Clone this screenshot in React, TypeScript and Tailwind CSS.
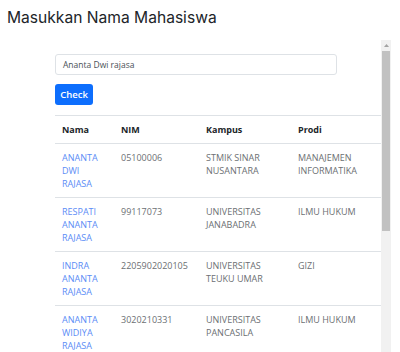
const rows = [
  { nama: ["ANANTA", "DWI", "RAJASA"], nim: "05100006", kampus: ["STMIK SINAR", "NUSANTARA"], prodi: ["MANAJEMEN", "INFORMATIKA"] },
  { nama: ["RESPATI", "ANANTA", "RAJASA"], nim: "99117073", kampus: ["UNIVERSITAS", "JANABADRA"], prodi: ["ILMU HUKUM"] },
  { nama: ["INDRA", "ANANTA", "RAJASA"], nim: "2205902020105", kampus: ["UNIVERSITAS", "TEUKU UMAR"], prodi: ["GIZI"] },
  { nama: ["ANANTA", "WIDIYA", "RAJASA"], nim: "3020210331", kampus: ["UNIVERSITAS", "PANCASILA"], prodi: ["ILMU HUKUM"] },
];

export default function App() {
  return (
    <div className="w-[400px] h-[352px] overflow-hidden bg-white">
      <h1 className="pl-[7px] pt-[8px] text-[15.6px] leading-[20px] text-[#212529] font-['Inter',sans-serif]">
        Masukkan Nama Mahasiswa
      </h1>

      <div className="mt-[12px] flex h-[320px]">
        <div className="w-[381px] pl-[55px] pt-[14px] font-['Open_Sans',sans-serif] text-[9px] leading-[13px]">
          <div className="w-[282px] h-[21px] border border-[#dee2e6] rounded-[3px] flex items-center px-[7px] text-[8.5px] text-[#495057]">
            Ananta Dwi rajasa
          </div>
          <button className="mt-[9px] h-[21px] w-[38px] rounded-[3px] bg-[#0d6efd] text-white text-[9.5px] font-semibold">
            Check
          </button>

          <table className="mt-[10px] w-[326px] border-collapse border-t border-[#dee2e6] text-left">
            <thead>
              <tr className="border-b border-[#dee2e6]">
                <th className="w-[59px] px-[7px] py-[7px] font-bold text-[#212529]">Nama</th>
                <th className="w-[85px] px-[7px] py-[7px] font-bold text-[#212529]">NIM</th>
                <th className="w-[92px] px-[7px] py-[7px] font-bold text-[#212529]">Kampus</th>
                <th className="px-[7px] py-[7px] font-bold text-[#212529]">Prodi</th>
              </tr>
            </thead>
            <tbody>
              {rows.map((r, i) => (
                <tr key={i} className="border-b border-[#dee2e6] align-top">
                  <td className="px-[7px] py-[7px] text-[#5b8cf6]">
                    {r.nama.map((n) => (
                      <div key={n}>{n}</div>
                    ))}
                  </td>
                  <td className="px-[7px] py-[7px] text-[#6c6f73]">{r.nim}</td>
                  <td className="px-[7px] py-[7px] text-[#6c6f73]">
                    {r.kampus.map((k) => (
                      <div key={k}>{k}</div>
                    ))}
                  </td>
                  <td className="px-[7px] py-[7px] text-[#6c6f73]">
                    {r.prodi.map((p) => (
                      <div key={p}>{p}</div>
                    ))}
                  </td>
                </tr>
              ))}
            </tbody>
          </table>
        </div>

        {/* fake scrollbar of the embedded frame */}
        <div className="w-[10px] h-full bg-[#f1f1f1] flex flex-col">
          <div className="h-[11px] flex items-center justify-center">
            <svg width="5" height="3" viewBox="0 0 5 3">
              <path d="M2.5 0 L5 3 L0 3 Z" fill="#a3a3a3" />
            </svg>
          </div>
          <div className="mx-[1px] h-[180px] bg-[#c1c1c1]" />
        </div>
      </div>
    </div>
  );
}
